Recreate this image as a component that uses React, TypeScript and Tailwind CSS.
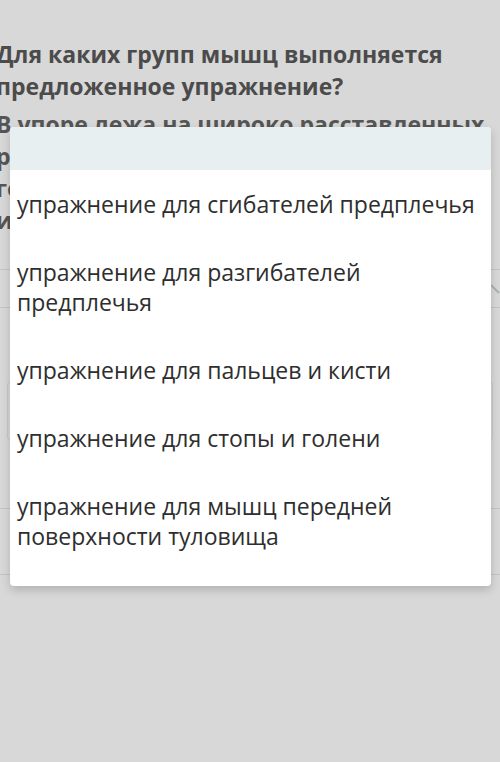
import React from "react";

const options = [
  "упражнение для сгибателей предплечья",
  "упражнение для разгибателей предплечья",
  "упражнение для пальцев и кисти",
  "упражнение для стопы и голени",
  "упражнение для мышц передней поверхности туловища",
];

const paragraph = [
  "В упоре лежа на широко расставленных",
  "руках сгибание и разгибание рук,",
  "голова прямо, ноги вместе, туловище",
  "имитировать отжимание",
];

export default function App() {
  return (
    <div
      className="relative w-[500px] h-[762px] overflow-hidden bg-[#d8d8d8]"
      style={{ fontFamily: '"Open Sans", "Noto Sans", sans-serif' }}
    >
      {/* dimmed page underneath */}
      <div className="pt-[38px] -ml-[4px] text-[#4b4b4b]">
        <h2 className="text-[23px] font-bold leading-[32px] pr-[40px]">
          Для каких групп мышц выполняется предложенное упражнение?
        </h2>
        <p className="mt-[6px] text-[23px] font-bold leading-[32px] text-[#555]">
          {paragraph.map((l) => (
            <span key={l} className="block whitespace-nowrap">
              {l}
            </span>
          ))}
        </p>
      </div>
      <div className="mt-[33px] flex flex-col">
        <div className="h-[39px] border-y border-[#c4c4c4] flex justify-end items-center">
          <svg width="10" height="12" viewBox="0 0 10 12" className="text-[#a9b3b6]">
            <path d="M1 2 L9 10" stroke="currentColor" strokeWidth="2" fill="none" />
          </svg>
        </div>
        <div className="mx-[7px] mt-[73px] h-[60px] rounded border border-[#c9c9c9]" />
        <div className="mt-[67px] h-[67px] border-y border-[#c4c4c4]" />
      </div>

      {/* dropdown card */}
      <div className="absolute left-[10px] top-[127px] w-[481px] rounded-[4px] bg-white shadow-[0_4px_10px_rgba(0,0,0,0.18)] overflow-hidden">
        <div className="h-[43px] bg-[#e8eff1]" />
        <ul className="pb-[16px] text-[#2e2e2e]">
          {options.map((o) => (
            <li key={o} className="pl-[7px] pr-[16px] py-[19px] text-[23px] leading-[30px]">
              {o}
            </li>
          ))}
        </ul>
      </div>
    </div>
  );
}
